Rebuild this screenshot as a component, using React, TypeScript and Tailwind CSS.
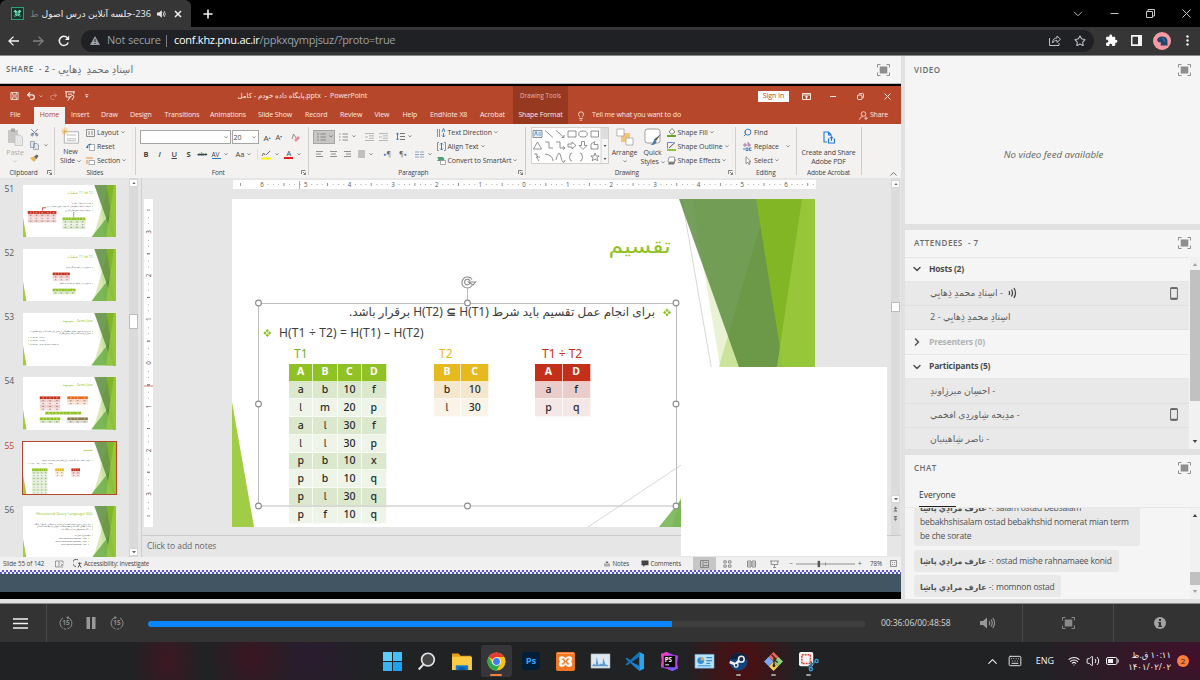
import React from "react";
import {
  Star,
  Wifi,
  Volume2,
  Keyboard,
  ChevronUp,
  ChevronDown,
  ChevronRight,
  Lightbulb,
  Undo2,
  Redo2,
  Scissors,
  Search,
} from "lucide-react";
import { MdExtension } from "react-icons/md";

const hostName = "اسِتادِ محمدِ ذِهابِي";
const chatName = "عارف مرادِي پاشِا";

function Caret({ className = "" }: { className?: string }) {
  return (
    <svg viewBox="0 0 5 3" className={"inline-block h-[2.500px] w-[4px] shrink-0 opacity-75 " + className} fill="none">
      <path d="M.5.5 2.5 2.3 4.5.5" stroke="currentColor" strokeWidth=".9" />
    </svg>
  );
}

function FullIcon({ className = "text-[#8e8e8e]" }: { className?: string }) {
  return (
    <svg viewBox="0 0 13 12" className={"h-[12px] w-[13px] shrink-0 " + className} fill="none" stroke="currentColor">
      <path d="M.5 3.5v-3h3M9.5.5h3v3M12.5 8.5v3h-3M3.5 11.5h-3v-3" />
      <rect x="2.700" y="2.500" width="7.600" height="7" fill="currentColor" stroke="none" />
    </svg>
  );
}

/* ---------- Browser chrome ---------- */

function TabBar() {
  return (
    <div className="flex h-[27px] shrink-0 items-center bg-black">
      <div className="flex h-full w-[191px] items-center rounded-t-[6px] bg-[#363636] pl-[11px]">
        <svg viewBox="0 0 13 13" className="h-[13px] w-[13px]" fill="none">
          <rect x=".5" y=".5" width="12" height="12" fill="#16352b" stroke="#2f9d77" />
          <path d="M3.5 3.5 9.5 9.5M9.5 3.5 3.5 9.5" stroke="#7fe0bd" strokeWidth="2.4" strokeDasharray="3 1" />
          <circle cx="6.5" cy="6.5" r="1.4" fill="#2f9d77" />
        </svg>
        <div dir="rtl" className="ml-[5px] flex w-[122px] items-center whitespace-nowrap text-[9.200px] tracking-[-0.1px] text-[#e8eaed]">
          <span>236-جلسه آنلاین درس اصول</span>
          <span className="mr-[3px] text-[#77787b]">ط</span>
        </div>
        <svg viewBox="0 0 9 8" className="ml-[6px] h-[8px] w-[9px]" fill="#e8eaed">
          <path d="M0 2.6h2L4.8.3v7.4L2 5.4H0z" />
          <path d="M6 2.2q1.4 1.8 0 3.6M7.2 1q2.2 3 0 6" fill="none" stroke="#e8eaed" strokeWidth=".8" />
        </svg>
        <svg viewBox="0 0 8 8" className="ml-[8px] h-[8px] w-[8px]" stroke="#f1f3f4" strokeWidth="1.5">
          <path d="M1 1l6 6M7 1 1 7" />
        </svg>
      </div>
      <svg viewBox="0 0 10 10" className="ml-[12px] h-[10px] w-[10px]" stroke="#f1f3f4" strokeWidth="1.6">
        <path d="M5 .4v9.2M.4 5h9.2" />
      </svg>
      <div className="ml-auto flex items-center gap-[27px] pr-[9px] text-[#c6c6c6]">
        <svg viewBox="0 0 10 6" className="h-[6px] w-[10px]" fill="none" stroke="currentColor" strokeWidth=".9">
          <path d="M1 .8l4 4 4-4" />
        </svg>
        <svg viewBox="0 0 9 9" className="h-[9px] w-[9px]" fill="none" stroke="currentColor">
          <path d="M.5 4.5h8" />
        </svg>
        <svg viewBox="0 0 9 9" className="h-[9px] w-[9px]" fill="none" stroke="currentColor">
          <path d="M.5 2.5h6v6h-6zM2 2V.5h6.500v6.500H7" />
        </svg>
        <svg viewBox="0 0 9 9" className="h-[9px] w-[9px]" fill="none" stroke="currentColor">
          <path d="M.5.5l8 8M8.500.5l-8 8" />
        </svg>
      </div>
    </div>
  );
}

function AddressBar() {
  return (
    <div className="flex h-[29px] shrink-0 items-center border-b border-[#8a8a8a] bg-[#363636] pb-[1px]">
      <svg viewBox="0 0 11 10" className="ml-[8px] h-[10px] w-[11px]" fill="none" stroke="#f1f3f4" strokeWidth="1.3">
        <path d="M11 5H1M5.500.6 1 5l4.500 4.400" />
      </svg>
      <svg viewBox="0 0 11 10" className="ml-[14px] h-[10px] w-[11px]" fill="none" stroke="#808185" strokeWidth="1.3">
        <path d="M0 5h10M5.500.6 10 5 5.500 9.400" />
      </svg>
      <svg viewBox="0 0 12 12" className="ml-[14px] h-[12px] w-[12px]" fill="none" stroke="#f1f3f4" strokeWidth="1.5">
        <path d="M10.200 7.500A4.600 4.600 0 1 1 9.300 2.700" />
        <path d="M11.200.6v4.300H6.900z" fill="#f1f3f4" stroke="none" />
      </svg>
      <div className="ml-[11px] flex h-[22px] w-[1013px] items-center rounded-full bg-[#202124] pl-[9px] text-[11px]">
        <svg viewBox="0 0 10 9" className="h-[9px] w-[10px]">
          <path d="M5 0l5 9H0z" fill="#9aa0a6" />
          <path d="M5 3v3M5 7v1" stroke="#202124" />
        </svg>
        <span className="ml-[7px] w-[59px] whitespace-nowrap text-[#9aa0a6] tracking-[-0.2px]">Not secure</span>
        <span className="h-[12px] w-px bg-[#7a7d81]" />
        <span className="ml-[7px] whitespace-nowrap tracking-[-0.27px] text-white">
          conf.khz.pnu.ac.ir<span className="tracking-[-0.290px] text-[#9aa0a6]">/ppkxqympjsuz/?proto=true</span>
        </span>
        <svg viewBox="0 0 12 11" className="mr-[13px] ml-auto h-[11px] w-[12px]" fill="none" stroke="#bdc1c6">
          <path d="M.5 3v7.500h9.500V8M3.500 8C3.500 4.500 5.500 3 8 3V1l3.500 3.300L8 7.500V5.500C6 5.500 4.500 6 3.500 8z" />
        </svg>
        <Star className="mr-[8px] h-[12px] w-[12px] text-[#bdc1c6]" strokeWidth={2.200} />
      </div>
      <MdExtension className="ml-[11px] h-[13px] w-[13px] text-white" />
      <svg viewBox="0 0 11 11" className="ml-[13px] h-[11px] w-[11px]">
        <path d="M0 0h11v11H0zM1.500 1.800v7.400h5.500V1.800z" fill="#f1f3f4" fillRule="evenodd" />
      </svg>
      <svg viewBox="0 0 18 18" className="ml-[11px] h-[18px] w-[18px]">
        <circle cx="9" cy="9" r="9" fill="#f79aa3" />
        <path d="M4 8q1-4 6-3.500 4.500.5 4.500 5v4H7.500q.5-2 .5-3-3 .5-4-2.500z" fill="#23466f" />
        <path d="M9 6q3 1 3 4" stroke="#3f7cac" fill="none" />
      </svg>
      <svg viewBox="0 0 3 11" className="ml-[15px] h-[11px] w-[3px]" fill="#f1f3f4">
        <circle cx="1.500" cy="1.500" r="1.200" />
        <circle cx="1.500" cy="5.500" r="1.200" />
        <circle cx="1.500" cy="9.500" r="1.200" />
      </svg>
    </div>
  );
}

/* ---------- PowerPoint ---------- */

const menu = [
  ["Insert", "w-[30px]"],
  ["Draw", "w-[29px]"],
  ["Design", "w-[34.5px]"],
  ["Transitions", "w-[45.5px]"],
  ["Animations", "w-[48px]"],
  ["Slide Show", "w-[47px]"],
  ["Record", "w-[35px]"],
  ["Review", "w-[34.5px]"],
  ["View", "w-[28px]"],
  ["Help", "w-[27.5px]"],
  ["EndNote X8", "w-[50px]"],
  ["Acrobat", "w-[33px]"],
];

function PptTitle() {
  return (
    <div className="flex h-[38px] shrink-0 bg-[#b7472a] text-[#fbe9e4]">
      <div className="flex w-[513px] flex-col">
        <div className="flex h-[20px] items-center pl-[10px]">
          <svg viewBox="0 0 9 9" className="h-[8px] w-[9px]" fill="none" stroke="currentColor">
            <path d="M.5.5h8v8h-8zM2.500.5v3h4v-3M2.500 8.500v-3h4v3" />
          </svg>
          <Undo2 className="ml-[7px] h-[10px] w-[10px]" strokeWidth={3} />
          <Caret className="ml-[3px]" />
          <Redo2 className="ml-[6px] h-[9px] w-[9px] opacity-40" strokeWidth={2.500} />
          <svg viewBox="0 0 10 10" className="ml-[7px] h-[10px] w-[10px]" fill="none" stroke="currentColor">
            <path d="M0 .8h10M1.200 1v5h4M8.800 1v2M3 9.500l2-3.500M3 3.200h4M5 6l3-2 1 2-2 3" />
          </svg>
          <svg viewBox="0 0 4 5" className="ml-[10px] h-[4px] w-[3.500px]" fill="currentColor">
            <path d="M0 .3h4v.8H0zM0 2.300h4L2 4.600z" />
          </svg>
          <span className="ml-[149px] whitespace-nowrap text-[7px] tracking-[-0.050px]">
            پایگاه داده خودم - کامل.pptx&nbsp; -&nbsp; PowerPoint
          </span>
        </div>
        <div className="flex h-[18px] items-center pt-px text-[7px] tracking-[-0.1px]">
          <span className="w-[34px] pl-[10px]">File</span>
          <span className="mr-[6px] flex h-full w-[31px] items-center justify-center bg-[#f3f2f1] text-[#b7472a]">Home</span>
          {menu.map(([label, width]) => (
            <span key={label} className={"shrink-0 whitespace-nowrap " + width}>
              {label}
            </span>
          ))}
        </div>
      </div>
      <div className="flex w-[55px] flex-col items-center bg-[#973920] text-[7px]">
        <span className="flex h-[20px] items-center whitespace-nowrap text-[6.200px] text-[#e3b5a8]">Drawing Tools</span>
        <span className="flex h-[18px] items-center pt-px whitespace-nowrap tracking-[-0.12px]">Shape Format</span>
      </div>
      <div className="flex flex-1 flex-col">
        <div className="flex h-[20px] items-center">
          <span className="ml-[190px] flex h-[11px] w-[31px] items-center justify-center bg-white text-[7px] text-[#b7472a]">Sign in</span>
          <svg viewBox="0 0 9 7" className="ml-[13px] h-[7px] w-[9px]" fill="none" stroke="currentColor">
            <path d="M.5.5h8v6h-8zM.5 2h8M4.500 6V3M3 4.300 4.500 3 6 4.300" />
          </svg>
          <span className="ml-[19px] h-px w-[6px] bg-current" />
          <svg viewBox="0 0 7 7" className="ml-[21px] h-[7px] w-[7px]" fill="none" stroke="currentColor">
            <rect x=".5" y="2" width="4.500" height="4.500" rx="1" />
            <path d="M2 1q0-.5 1-.5h2.500q1 0 1 1V4q0 1-.8 1" />
          </svg>
          <svg viewBox="0 0 7 7" className="ml-[20px] h-[7px] w-[7px]" stroke="currentColor">
            <path d="M.5.5l6 6M6.500.5l-6 6" />
          </svg>
        </div>
        <div className="flex h-[18px] items-center pt-px text-[7px]">
          <Lightbulb className="ml-[8px] h-[10px] w-[10px]" />
          <span className="ml-[6px] tracking-[-0.11px]">Tell me what you want to do</span>
          <svg viewBox="0 0 9 9" className="mr-[2px] ml-auto h-[9px] w-[9px]" fill="none" stroke="currentColor" strokeWidth=".8">
            <circle cx="4.500" cy="3" r="2.300" />
            <path d="M.5 8.700q.5-3 3-3.200M7 5.500v3.500M5.300 7.200h3.500" />
          </svg>
          <span className="mr-[13px] tracking-[-0.15px]">Share</span>
        </div>
      </div>
    </div>
  );
}

function Group({
  label,
  width,
  corner = true,
  children,
}: {
  label: string;
  width: string;
  corner?: boolean;
  children: React.ReactNode;
}) {
  return (
    <div className={"flex shrink-0 " + width}>
      <div className="flex min-w-0 flex-1 flex-col">
        <div className="flex h-[43px] flex-1">{children}</div>
        <div className="flex h-[11px] items-center justify-center text-[6.500px] tracking-[-0.15px] text-[#444]">
          <span className="flex-1 text-center whitespace-nowrap">{label}</span>
          {corner && (
            <svg viewBox="0 0 5 5" className="mr-[2px] h-[5px] w-[5px]" fill="none" stroke="#666" strokeWidth=".8">
              <path d="M.5 4V.5h4M2 2l2.500 2.500M4.500 2.500v2H2.500" />
            </svg>
          )}
        </div>
      </div>
      <span className="mt-[3px] h-[48px] w-px bg-[#d0cfce]" />
    </div>
  );
}

function Lines({ className = "", d }: { className?: string; d: string }) {
  return (
    <svg viewBox="0 0 9 8" className={"h-[8px] w-[9px] shrink-0 " + className} fill="none" stroke="#777" strokeWidth=".8">
      <path d={d} />
    </svg>
  );
}

function Ribbon() {
  return (
    <div className="flex h-[54px] shrink-0 bg-[#f3f2f1] text-[7px] leading-[9px] tracking-[-0.08px] text-[#444]">
      <Group label="Clipboard" width="w-[55px]">
        <div className="flex w-[30px] flex-col items-center pt-[4px] text-[#b0aeac]">
          <svg viewBox="0 0 16 18" className="h-[18px] w-[16px]">
            <path d="M1 2h10v13H1z" fill="#c9c7c5" />
            <path d="M4 .5h4V4H4z" fill="#a9a7a5" />
            <path d="M8 7h5l2.500 2.500V17.500H8z" fill="#e9e8e8" stroke="#bbb" strokeWidth=".7" />
          </svg>
          <span className="mt-[2px]">Paste</span>
          <Caret className="mt-[3px]" />
        </div>
        <div className="flex flex-1 flex-col gap-[4px] pt-[4px]">
          <Scissors className="h-[9px] w-[9px] -rotate-90 text-[#46678f]" />
          <div className="flex items-center gap-[5px]">
            <svg viewBox="0 0 9 9" className="h-[9px] w-[9px]" fill="#e4e9ee" stroke="#8a97a5" strokeWidth=".8">
              <path d="M.5.5h4v6h-4zM3.500 2.500h3.500l1.500 1.500v4.500h-5z" />
            </svg>
            <Caret />
          </div>
          <svg viewBox="0 0 9 9" className="h-[9px] w-[9px]">
            <path d="M0 4l4 4 2.500-3L4 2.500z" fill="#e8b35d" />
            <path d="M4 2.500l3-2 1.500 1.500L6.500 5z" fill="#666" />
          </svg>
        </div>
      </Group>
      <Group label="Slides" width="w-[80.500px]" corner={false}>
        <div className="flex w-[31px] flex-col items-center pt-[3px] text-center whitespace-nowrap">
          <svg viewBox="0 0 20 18" className="h-[18px] w-[19px]" fill="none">
            <path d="M3.500 4.500h15v12h-15z" fill="#fff" stroke="#999" strokeWidth=".8" />
            <path d="M6 8h10M6 12h10M6 14h10" stroke="#bbb" />
            <path d="M4 0v8M0 4h8M1 1l6 6M7 1 1 7" stroke="#e9ae49" strokeWidth=".8" />
          </svg>
          <span className="mt-[2px]">New</span>
          <span>Slide <Caret /></span>
        </div>
        <div className="flex flex-col gap-[5px] pt-[4px] whitespace-nowrap">
          <span className="flex items-center gap-[2px]"><Lines d="M.5.5h8v7h-8zM2 3h2M5 3h2M2 5h2M5 5h2" />Layout <Caret /></span>
          <span className="flex items-center gap-[2px]">
            <svg viewBox="0 0 9 8" className="h-[8px] w-[9px]" fill="none"><path d="M3.500 1.500h5v6h-5z" fill="#fff" stroke="#888" strokeWidth=".7" /><path d="M5 1Q1 1 1 5M0 3.500 1 5l1.500-1" stroke="#2e75b6" /></svg>
            Reset
          </span>
          <span className="flex items-center gap-[2px]">
            <svg viewBox="0 0 9 8" className="h-[8px] w-[9px]" fill="none"><path d="M0 1h7M1 3v4" stroke="#e08a3c" /><path d="M3 3.500h5.500v4H3z" fill="#fff" stroke="#888" strokeWidth=".7" /></svg>
            Section <Caret />
          </span>
        </div>
      </Group>
      <Group label="Font" width="w-[173.500px]">
        <div className="flex flex-1 flex-col pt-[6px] pl-[4px]">
          <div className="flex h-[14px] items-center">
            <span className="flex h-[14px] w-[91px] items-center justify-end border border-[#a5a5a5] bg-white pr-[2px]"><Caret /></span>
            <span className="ml-px flex h-[14px] w-[27px] items-center justify-between border border-[#a5a5a5] bg-white px-[1px] pr-[2px]">20 <Caret /></span>
            <span className="ml-[5px] text-[8px]">A<sup className="text-[4px] text-[#2e75b6]">▴</sup></span>
            <span className="ml-[5px] text-[7.500px]">A<sup className="text-[4px] text-[#2e75b6]">▾</sup></span>
            <svg viewBox="0 0 9 9" className="ml-[9px] h-[9px] w-[9px]"><path d="M1 6 2.500 1 5 5" fill="none" stroke="#777" strokeWidth=".8" /><path d="M3 7l4-4 2 2-4 4z" fill="#e58fa0" /></svg>
          </div>
          <div className="mt-[4px] flex h-[13px] items-center text-[7.500px]">
            <b className="w-[15px] pl-[4px]">B</b>
            <i className="w-[13px] pl-[4px] font-semibold">I</i>
            <u className="w-[15px] pl-[4px] font-semibold">U</u>
            <b className="w-[14px] pl-[4px]">S</b>
            <s className="w-[15px] pl-px text-[6px]">abc</s>
            <span className="w-[9px] border-b border-[#2e75b6] text-[6.500px] leading-[7px]">AV</span>
            <Caret className="ml-[3px]" />
            <span className="ml-[8px]">Aa</span>
            <Caret className="ml-[3px]" />
            <span className="ml-[6px] h-[11px] w-px bg-[#ddd]" />
            <svg viewBox="0 0 10 10" className="ml-[3px] h-[10px] w-[10px]"><path d="M1 6l1.500-3L4 5M5 5l4-4" stroke="#666" fill="none" /><path d="M0 7.500h10v2H0z" fill="#fff200" /></svg>
            <Caret className="ml-[4px]" />
            <span className="ml-[5px] flex w-[9px] justify-center border-b-2 border-[#e51b1b] leading-[7px]">A</span>
            <Caret className="ml-[4px]" />
          </div>
        </div>
      </Group>
      <Group label="Paragraph" width="w-[216.500px]">
        <div className="flex w-[127.500px] flex-col pt-[5px] pl-[4px]">
          <div className="flex h-[15px] items-center">
            <span className="flex h-[14px] w-[22px] items-center gap-[3px] border border-[#a8a6a4] bg-[#c8c6c4] pl-[3px]"><Lines d="M0 1h2M3.500 1H9M0 4h2M3.500 4H9M0 7h2M3.500 7H9" /><Caret /></span>
            <Lines className="ml-[4px]" d="M0 1h1.500M3.500 1H9M0 4h1.500M3.500 4H9M0 7h1.500M3.500 7H9" /><Caret className="ml-[4px]" />
            <Lines className="ml-[9px] opacity-60" d="M0 .5h9M4 2.800h5M4 5.200h5M0 7.500h9M3 4H0" />
            <Lines className="ml-[5px] opacity-60" d="M0 .5h9M4 2.800h5M4 5.200h5M0 7.500h9M0 4h3" />
            <svg viewBox="0 0 9 9" className="ml-[8px] h-[9px] w-[9px]" fill="none"><path d="M1.500 1v7M.2 2.300 1.500 1l1.300 1.300M.2 6.700 1.500 8l1.300-1.300" stroke="#2e75b6" strokeWidth=".9" /><path d="M4 1.500h5M4 4.500h5M4 7.500h5" stroke="#777" /></svg>
            <Caret className="ml-[3px]" />
          </div>
          <div className="mt-[3px] flex h-[14px] items-center">
            <Lines className="ml-[2px]" d="M1 1.500h7M1 4h5M1 6.500h7" />
            <Lines className="ml-[5px]" d="M1 1.500h7M2 4h5M1 6.500h7" />
            <Lines className="ml-[5px]" d="M1 1.500h7M3 4h5M1 6.500h7" />
            <Lines className="ml-[5px]" d="M1 1h7M1 3h7M1 5h7M1 7h7" />
            <Caret className="ml-[3px]" />
            <span className="ml-[11px] text-[7px] text-[#666]"><span className="text-[5px] text-[#2e75b6]">▸</span>¶</span>
            <span className="ml-[8px] text-[7px] text-[#666]">¶<span className="text-[5px] text-[#2e75b6]">◂</span></span>
            <svg viewBox="0 0 9 7" className="ml-[9px] h-[7px] w-[9px]" stroke="#8aa7bf" strokeWidth="1.200"><path d="M0 1h4M5 1h4M0 3.500h4M5 3.500h4M0 6h4M5 6h4" /></svg>
            <Caret className="ml-[4px]" />
          </div>
        </div>
        <div className="flex flex-col gap-[5px] pt-[4px] whitespace-nowrap">
          <span className="flex items-center gap-[2px]"><svg viewBox="0 0 9 9" className="h-[9px] w-[9px]" fill="none"><path d="M.5 1v8M2.500 1v8" stroke="#777" strokeWidth=".8" /><path d="M5 4l1.500-3.500L8 4M6.500 5v4M5 7.500 6.500 9 8 7.500" stroke="#2e75b6" strokeWidth=".9" /></svg>Text Direction <Caret /></span>
          <span className="flex items-center gap-[2px]"><svg viewBox="0 0 9 9" className="h-[9px] w-[9px]" fill="none"><path d="M2 .5H.5v8H2M7 .5h1.500v8H7" stroke="#777" strokeWidth=".8" /><path d="M4.500 1v7M3 2.500 4.500 1 6 2.500M3 6.500 4.500 8 6 6.500" stroke="#2e75b6" strokeWidth=".9" /></svg>Align Text <Caret /></span>
          <span className="flex items-center gap-[2px]"><svg viewBox="0 0 9 9" className="h-[9px] w-[9px]"><path d="M0 1h6l1.500 2L6 5H0l1.500-2z" fill="#4ea077" /><path d="M3.500 4.500h5v4h-5z" fill="#fff" stroke="#888" strokeWidth=".7" /></svg>Convert to SmartArt <Caret /></span>
        </div>
      </Group>
      <Group label="Drawing" width="w-[210.500px]">
        <div className="pt-[3px] pl-[5px]">
          <svg viewBox="0 0 78 37" className="h-[37px] w-[78px]" fill="none" stroke="#777" strokeWidth=".8">
            <path d="M.5.5h77v36h-77z" fill="#fff" stroke="#c8c6c4" />
            <path d="M70 .5h7.500v36H70z" fill="#f6f6f6" stroke="#c8c6c4" />
            <path d="M70 1h7v11h-7z" fill="#ddd" stroke="none" />
            <path d="M2 3.500h9v7H2z" fill="#e5eef6" /><path d="M3.500 8.500 5 4.500l1.500 4M7.500 6h2.500M7.500 8h2.500" stroke="#2e75b6" strokeWidth=".7" />
            <path d="M14 3.500l8 7M25 3.500l8 7M33 8v2.500h-2.500M37 4h8v6h-8zM60 4h7.500v6H60z" />
            <ellipse cx="52" cy="7" rx="4.300" ry="3" />
            <path d="M2.500 22l4-7 4 7zM14 15h4v6h4M25 15h4v6h5M32 19.500l2 1.500-2 1.500M37 17h4v-2l4 3.500-4 3.500v-2h-4zM50.500 14.500h3v4h2.500l-4 4-4-4h2.500zM60 22v-5l4-2.500-1 3h4v4.500z" />
            <path d="M3 27h3v3h3M5 31l2-2M8 34l-2-3M14 27q8 1 8 7M25 33q3-12 5-3t4 3M41 26q-2 0-2 2t-1 2q1 0 1 2t2 2M49 26q2 0 2 2t1 2q-1 0-1 2t-2 2" />
            <path d="M64 26l1.200 3h3l-2.300 1.800.9 3-2.800-1.700-2.800 1.700.9-3L59.800 29h3z" />
            <path d="M72.500 18h3L74 20zM72 29h4M72.500 31h3L74 33z" fill="#555" stroke="none" />
          </svg>
        </div>
        <div className="flex w-[32px] flex-col items-center pt-[4px]">
          <svg viewBox="0 0 18 18" className="h-[18px] w-[18px]" stroke="#999" strokeWidth=".7"><path d="M5 5h9v9H5z" fill="#f2c77d" stroke="none" /><path d="M1 1h7v7H1zM10 10h7v7h-7z" fill="#fff" /></svg>
          <span className="mt-[2px]">Arrange</span>
          <Caret className="mt-[3px]" />
        </div>
        <div className="flex w-[24px] flex-col items-center pt-[4px] whitespace-nowrap">
          <svg viewBox="0 0 18 18" className="h-[18px] w-[18px]"><rect x="1" y="1" width="15" height="14" rx="2.500" fill="#fff" stroke="#888" strokeWidth=".8" /><path d="M17 6l-5 7-2-1.500z" fill="#555" /><path d="M10 11.500l2.500 2q-1 4-6 3.500 2.500-1 3.500-5.500z" fill="#3c78b4" /></svg>
          <span className="mt-[2px]">Quick</span>
          <span>Styles <Caret /></span>
        </div>
        <div className="flex flex-col gap-[5px] pt-[4px] pl-[2px] whitespace-nowrap">
          <span className="flex items-center gap-[2px]"><svg viewBox="0 0 9 9" className="h-[9px] w-[9px]"><path d="M2 4l3-3.500L8 4 5 6.500z" fill="#fff" stroke="#666" strokeWidth=".8" /><path d="M0 7h9v2H0z" fill="#6aa52b" /></svg>Shape Fill <Caret /></span>
          <span className="flex items-center gap-[2px]"><svg viewBox="0 0 9 9" className="h-[9px] w-[9px]"><path d="M.5.5h6M.5.5v6" stroke="#4a86c5" strokeWidth=".9" /><path d="M2 6l6-5.500" stroke="#555" /><path d="M0 7h9v2H0z" fill="#8cc63f" /></svg>Shape Outline <Caret /></span>
          <span className="flex items-center gap-[2px]"><svg viewBox="0 0 9 9" className="h-[9px] w-[9px]"><path d="M3 3.500h6L7 8.500H1z" fill="#777" /><path d="M2 1h5.500v5H1z" fill="#fff" stroke="#888" strokeWidth=".8" /></svg>Shape Effects <Caret /></span>
        </div>
      </Group>
      <Group label="Editing" width="w-[60.500px]" corner={false}>
        <div className="flex flex-col gap-[5px] pt-[4px] pl-[7px] whitespace-nowrap">
          <span className="flex items-center gap-[2px]"><Search className="h-[9px] w-[9px] -scale-x-100 text-[#2e75b6]" strokeWidth={2.500} />Find</span>
          <span className="flex items-center gap-[2px]"><svg viewBox="0 0 9 9" className="h-[9px] w-[9px]" fill="none" strokeWidth=".9"><path d="M1 2h2v2H1zM5 0v4h2V2H5" stroke="#a56aa5" /><path d="M3 6v2.500h2V6zM8.500 6h-2v2.500h2M0 7h2" stroke="#2e75b6" /></svg>Replace <Caret className="ml-[5px]" /></span>
          <span className="flex items-center gap-[2px]"><svg viewBox="0 0 9 9" className="h-[9px] w-[9px]" fill="#fff" stroke="#777" strokeWidth=".8"><path d="M3 .8v7l1.800-1.600L6 8.500l1-.5-1-2.300h2z" /></svg>Select <Caret /></span>
        </div>
      </Group>
      <Group label="Adobe Acrobat" width="w-[65px]" corner={false}>
        <div className="flex flex-1 flex-col items-center pt-[7px] tracking-[-0.15px] whitespace-nowrap">
          <svg viewBox="0 0 12 13" className="h-[13px] w-[12px]" fill="none" stroke="#2577d2" strokeWidth="1.100"><path d="M4 11H1V1h4.500L8 3.500V5M5.500 1v3H8M6.500 8H5.500v4h6V8h-1M8.500 10V6M7 7.200 8.500 5.700 10 7.200" /></svg>
          <span className="mt-[4px]">Create and Share</span>
          <span>Adobe PDF</span>
        </div>
      </Group>
      <div className="flex flex-1 items-end justify-end pr-[4px] pb-[2px]">
        <svg viewBox="0 0 7 4" className="h-[4px] w-[7px]" fill="none" stroke="#555" strokeWidth=".8"><path d="M.5 3.500l3-3 3 3" /></svg>
      </div>
    </div>
  );
}

function Decor() {
  return (
    <g>
      <path d="M450 0L507 328M356 328L583 177" stroke="#d8d8d8" strokeWidth="1" />
      <path d="M460 0H583V328H515z" fill="#90c226" opacity=".2" />
      <path d="M536 0H583V328H440z" fill="#90c226" opacity=".32" />
      <path d="M427 328L583 132V328z" fill="#5ba536" opacity=".75" />
      <path d="M447 0H583V328H564z" fill="#4f8430" opacity=".78" />
      <path d="M524 0H583V328H577z" fill="#86bb20" opacity=".85" />
      <path d="M570 0H583V328H521z" fill="#9ccb40" opacity=".8" />
      <path d="M0 203L22 328H0z" fill="#a0cc46" />
    </g>
  );
}

function MiniTable({ x, y, cols, rows, cw, head, tint }: { x: number; y: number; cols: number; rows: number; cw: number; head: string; tint: string }) {
  const cells = [];
  for (let r = 0; r <= rows; r++)
    for (let c = 0; c < cols; c++)
      cells.push(
        <g key={r + "-" + c}>
          <rect x={x + c * cw} y={y + r * 18} width={cw - 0.6} height={17.4} fill={r ? tint : head} opacity={r ? (r % 2 ? 1 : 0.6) : 1} />
          <rect x={x + c * cw + cw * 0.38} y={y + r * 18 + 6} width={cw * 0.24} height={6} fill={r ? "#555" : "#fff"} opacity={0.55} />
        </g>,
      );
  return <g>{cells}</g>;
}

function Heading({ children }: { children: string }) {
  return (
    <text x="438" y="54" textAnchor="end" fontSize="23" fill="#90c226">
      {children}
    </text>
  );
}

function Body({ x = 425, y, children, anchor = "end", size = 12 }: { x?: number; y: number; children: string; anchor?: "start" | "end"; size?: number }) {
  return (
    <g>
      <text x={x} y={y} textAnchor={anchor} fontSize={size} fill="#404040">
        {children}
      </text>
      <circle cx={anchor === "end" ? x + 12 : x - 10} cy={y - 4} r="3" fill="#90c226" />
    </g>
  );
}

const red = { head: "#c42f1a", tint: "#eecbc9" };
const green = { head: "#90c226", tint: "#d9e8c9" };

const slides: { n: number; art: React.ReactNode }[] = [
  {
    n: 51,
    art: (
      <g>
        <Heading>عملیات T1 ⋈ T2</Heading>
        <Body y={118}>مرحله ۱: ضرب T1 × T2</Body>
        <Body y={138}>مرحله ۲: انتخاب سطرهایی که مقدار ستون مشترک برابر</Body>
        <Body y={160}>مرحله ۳: حذف ستون‌های تکراری</Body>
        <MiniTable x={30} y={163} cols={5} rows={3} cw={36} {...red} />
        <MiniTable x={248} y={203} cols={4} rows={3} cw={36} {...green} />
        <path d="M122 160V142H145" stroke="#b03a2e" strokeWidth="5" fill="none" />
        <path d="M318 168V200" stroke="#6aa52b" strokeWidth="5" />
      </g>
    ),
  },
  {
    n: 52,
    art: (
      <g>
        <Heading>عملیات T1 ⋈ T2</Heading>
        <Body y={120}>اگر جدول T2 به صورت زیر باشد</Body>
        <MiniTable x={186} y={147} cols={3} rows={2} cw={36} {...red} />
        <Body y={222}>حاصل T1 ⋈ T2 به صورت زیر خواهد بود</Body>
        <MiniTable x={186} y={248} cols={4} rows={1} cw={36} {...green} />
      </g>
    ),
  },
  {
    n: 53,
    art: (
      <g>
        <Heading>نیم‌پیوند - Semi-Join</Heading>
        <Body y={118} size={12.500}>نیم پیوند دو جدول شامل سطرهایی از جدول اول است که در پیوند طبیعی با</Body>
        <Body y={133}>جدول دوم شرکت می‌کنند و ستون‌های آن</Body>
        <Body x={45} y={158} anchor="start">T1 ⋉ T2 = Π (T1)</Body>
        <Body x={45} y={178} anchor="start">T1 ⋊ T2 = Π (T2)</Body>
        <Body x={45} y={198} anchor="start">T1 ⋉ T2 = Π (T1 ⋈ T2) ≠ T2 ⋉ T1</Body>
      </g>
    ),
  },
  {
    n: 54,
    art: (
      <g>
        <Heading>نیم‌پیوند - Semi-Join</Heading>
        <MiniTable x={105} y={121} cols={3} rows={4} cw={43} {...red} />
        <MiniTable x={278} y={121} cols={3} rows={2} cw={43} head="#e76618" tint="#f8d3c4" />
        <MiniTable x={140} y={217} cols={5} rows={0} cw={45} {...green} />
        <MiniTable x={105} y={253} cols={3} rows={1} cw={43} {...green} />
        <MiniTable x={278} y={253} cols={3} rows={1} cw={43} head="#8a7a4a" tint="#dedbd0" />
      </g>
    ),
  },
  {
    n: 55,
    art: (
      <g>
        <Heading>تقسیم</Heading>
        <Body y={118}>برای انجام عمل تقسیم باید شرط H(T2) ⊆ H(T1) برقرار باشد.</Body>
        <Body x={47} y={138} anchor="start">H(T1 ÷ T2) = H(T1) – H(T2)</Body>
        <MiniTable x={57} y={165} cols={4} rows={8} cw={24.300} {...green} />
        <MiniTable x={202} y={165} cols={2} rows={2} cw={27.500} head="#e6b91e" tint="#f5e8cf" />
        <MiniTable x={303} y={165} cols={2} rows={2} cw={27.500} {...red} />
      </g>
    ),
  },
  {
    n: 56,
    art: (
      <g>
        <Heading>(Structured Query Language) SQL</Heading>
        <Body y={118} size={12.500}>زبان پرس و جوی ساخت یافته برای تعریف و دستکاری داده‌ها در پایگاه</Body>
        <Body y={133} size={12.500}>داده رابطه‌ای است که توسط استاندارد جهانی پذیرفته شده است و</Body>
        <Body y={148}>در اکثر سیستم‌های مدیریت پایگاه داده</Body>
        <Body y={186}>انواع دستورات SQL:</Body>
        <Body x={400} y={206}>Data Definition Language - DDL</Body>
        <Body x={400} y={225}>Data Manipulation Language - DML</Body>
        <Body x={400} y={245}>Data Control Language - DCL</Body>
      </g>
    ),
  },
];

function Thumbs() {
  return (
    <div className="flex h-full w-[129px] flex-col overflow-hidden pt-[5.500px]">
      {slides.map(({ n, art }) => (
        <div key={n} className="flex h-[64.300px] shrink-0 items-start">
          <span className={"w-[21.500px] pl-[4.500px] text-[8.500px] leading-[10px] " + (n === 55 ? "text-[#c2452a]" : "text-[#5a5a5a]")}>{n}</span>
          <div className={"border-[1.500px] " + (n === 55 ? "border-[#b7472a]" : "border-transparent")}>
            <svg viewBox="0 0 583 328" className="block h-[52.500px] w-[93px] bg-white">
              <Decor />
              {art}
            </svg>
          </div>
        </div>
      ))}
    </div>
  );
}

function HRuler() {
  const marks = [];
  for (let i = -6; i <= 6; i++) marks.push(i);
  return (
    <svg viewBox="0 0 583 9" className="h-[9px] w-[583px] bg-white" fontSize="6.200" fill="#555">
      {marks.map((i) => (
        <g key={i}>
          <text x={291 + i * 43.650} y="6.800" textAnchor="middle">{Math.abs(i)}</text>
          <path d={`M${291 + i * 43.650 + 21.800} 3v3`} stroke="#777" strokeWidth=".8" />
          <path d={`M${291 + i * 43.650 + 5.500} 4.500h1M${291 + i * 43.650 + 11} 4.500h1M${291 + i * 43.650 + 16} 4.500h1M${291 + i * 43.650 + 27} 4.500h1M${291 + i * 43.650 + 32} 4.500h1M${291 + i * 43.650 + 37.500} 4.500h1`} stroke="#999" strokeWidth=".8" />
        </g>
      ))}
      <path d="M7.500 3v3" stroke="#777" strokeWidth=".7" />
      <path d="M66.500 1v8" stroke="#c77" strokeWidth=".7" />
    </svg>
  );
}

function VRuler() {
  const marks = [-3, -2, -1, 0, 1, 2, 3];
  return (
    <svg viewBox="0 0 9 328" className="h-[328px] w-[9px] bg-white" fontSize="6.200" fill="#555">
      {marks.map((i) => (
        <g key={i}>
          <text transform={`translate(6.500 ${164 + i * 43.700}) rotate(-90)`} textAnchor="middle">{Math.abs(i)}</text>
          <path d={`M3 ${164 + i * 43.700 + 21.800}h3M3 ${164 + i * 43.700 - 21.800}h3`} stroke="#777" strokeWidth=".8" />
          <path d={`M4.500 ${164 + i * 43.700 + 8}v1M4.500 ${164 + i * 43.700 + 14}v1M4.500 ${164 + i * 43.700 - 9}v1M4.500 ${164 + i * 43.700 - 15}v1`} stroke="#999" strokeWidth=".8" />
        </g>
      ))}
      <path d="M0 187h9" stroke="#c2452a" strokeWidth=".7" />
    </svg>
  );
}

function DataTable({ rows, col, head, odd, even }: { rows: string[][]; col: string; head: string; odd: string; even: string }) {
  return (
    <div className="flex flex-col">
      {rows.map((r, i) => (
        <div key={i} className={"flex " + (i === 0 ? "h-[18px]" : "h-[17.750px]")}>
          {r.map((c, j) => (
            <div
              key={j}
              className={
                "flex items-center justify-center border-r border-b border-white/70 pt-[0.500px] text-[10.500px] " +
                col +
                " " +
                (i === 0 ? "font-bold text-white " + head : "font-medium text-[#2a2a2a] " + (i % 2 ? odd : even))
              }
            >
              <span className={c === "l" ? "font-['Inter'] [font-feature-settings:'cv05'] font-normal" : ""}>{c}</span>
            </div>
          ))}
        </div>
      ))}
    </div>
  );
}

const t1 = ["ABCD", "a b 10 f", "l m 20 p", "a l 30 f", "l l 30 p", "p b 10 x", "p b 10 q", "p l 30 q", "p f 10 q"].map((r, i) => (i ? r.split(" ") : r.split("")));

function Slide() {
  return (
    <div className="relative h-[328px] w-[583px] overflow-hidden bg-white font-['Noto_Sans','DejaVu_Sans',sans-serif]">
      <svg viewBox="0 0 583 328" className="absolute inset-0 h-[328px] w-[583px]">
        <Decor />
      </svg>
      <div dir="rtl" className="absolute top-[27px] right-[144px] font-['DejaVu_Sans'] text-[20px] leading-[40px] whitespace-nowrap text-[#90c226]">
        <span className="inline-block origin-right scale-x-[1.18]">تقسیم</span>
      </div>
      <div dir="rtl" className="absolute top-[104px] right-[160px] text-[12px] leading-[17px] whitespace-nowrap text-[#404040]">
        برای انجام عمل تقسیم باید شرط <span dir="ltr">H(T2) <b>⊆</b> H(T1)</span> برقرار باشد.
      </div>
      <div className="absolute top-[126px] left-[47px] text-[12px] leading-[16px] tracking-[0.150px] whitespace-nowrap text-[#404040]">H(T1 ÷ T2) = H(T1) – H(T2)</div>
      <div className="absolute top-[146.500px] left-[62px] text-[12px] leading-[16px] text-[#6fb12f]">T1</div>
      <div className="absolute top-[146.500px] left-[207px] text-[12px] leading-[16px] text-[#e6b91e]">T2</div>
      <div className="absolute top-[146.500px] left-[310px] text-[12px] leading-[16px] whitespace-nowrap text-[#c42f1a]">T1 ÷ T2</div>
      <div className="absolute top-[164.500px] left-[57px]">
        <DataTable rows={t1} col="w-[24.400px]" head="bg-[#90c226]" odd="bg-[#dbe8cd]" even="bg-[#eef4e8]" />
      </div>
      <div className="absolute top-[164.500px] left-[201.500px]">
        <DataTable rows={[["B", "C"], ["b", "10"], ["l", "30"]]} col="w-[27.800px]" head="bg-[#e6b91e]" odd="bg-[#f5e7cd]" even="bg-[#faf3e8]" />
      </div>
      <div className="absolute top-[164.500px] left-[303px]">
        <DataTable rows={[["A", "D"], ["a", "f"], ["p", "q"]]} col="w-[27.800px]" head="bg-[#c42f1a]" odd="bg-[#eaccca]" even="bg-[#f5e7e6]" />
      </div>
      <svg viewBox="0 0 583 328" className="absolute inset-0 h-[328px] w-[583px]" fill="none">
        <path d="M26.500 104.500h418v202.500h-418zM235.500 90v14" stroke="#bdbdbd" />
        <path d="M240 80.500a5.500 5.500 0 1 0 0 6M237.800 84.500a2.800 2.800 0 1 1 .2-2.500M236.500 83h7l-2.500 3z" stroke="#8a8a8a" strokeWidth="1.100" />
        <g fill="#fff" stroke="#8c8c8c" strokeWidth="1.100">
          {[[26.500, 104], [235.500, 104], [444, 104], [26.500, 205], [444, 205], [26.500, 307], [235.500, 307], [444, 307]].map(([x, y]) => (
            <circle key={x + "-" + y} cx={x} cy={y} r="2.900" />
          ))}
        </g>
        <g fill="#90c226">
          {[[35.300, 134], [435, 113.500]].map(([x, y]) => (
            <path key={x} d={`M${x} ${y - 4}l1.700 1.700-1.700 1.700-1.700-1.700zM${x} ${y + 0.600}l1.700 1.700-1.700 1.700-1.700-1.700zM${x - 2.300} ${y - 1.700}l1.700 1.700-1.700 1.700-1.700-1.700zM${x + 2.300} ${y - 1.700}l1.700 1.700-1.700 1.700-1.700-1.700z`} />
          ))}
        </g>
      </svg>
    </div>
  );
}

function ScrollArrow({ up = false }: { up?: boolean }) {
  return (
    <span className="flex h-[8px] w-[9px] items-center justify-center border border-[#d5d5d5] bg-white">
      <svg viewBox="0 0 4 2.500" className={"h-[2.500px] w-[4px] " + (up ? "" : "rotate-180")} fill="#666">
        <path d="M0 2.500 2 0l2 2.500z" />
      </svg>
    </span>
  );
}

function Workspace() {
  return (
    <div className="relative flex h-[379px] shrink-0 bg-[#e6e6e6]">
      <Thumbs />
      <div className="flex w-[9px] flex-col bg-[#dadada] pt-px">
        <ScrollArrow up />
        <span className="mt-[127px] h-[15px] border border-[#bbb] bg-white" />
        <span className="mt-auto mb-[1px]"><ScrollArrow /></span>
      </div>
      <div className="ml-[3px] flex flex-1 flex-col border-l border-[#cfcfcf]">
        <div className="flex h-[357px]">
          <div className="flex w-[91px] pt-[21px] pl-[2px]">
            <VRuler />
          </div>
          <div className="flex flex-1 flex-col">
            <div className="flex pt-[2px]"><HRuler /></div>
            <div className="mt-[10px] -ml-px flex"><Slide /></div>
          </div>
          <div className="mr-px flex w-[9px] flex-col bg-[#dcdcdc] pt-[2px]">
            <ScrollArrow up />
            <span className="mt-[114px] h-[10px] border border-[#bbb] bg-white" />
            <span className="mt-auto"><ScrollArrow /></span>
            <svg viewBox="0 0 9 20" className="mb-[12px] h-[20px] w-[9px]" fill="#777">
              <path d="M2.500 6 4.500 3.500 6.500 6zM2.500 8.500 4.500 6 6.500 8.500zM2.500 13h4l-2 2.500zM2.500 15.500h4L4.500 18z" />
            </svg>
          </div>
        </div>
        <div className="flex flex-1 items-center border-t border-[#cbcbcb] pl-[5px] text-[8.500px] tracking-[-0.050px] text-[#666]">Click to add notes</div>
      </div>
      <div className="absolute top-[189px] left-[681px] h-[189px] w-[206px] bg-white" />
    </div>
  );
}

function Status() {
  return (
    <div className="flex h-[13px] shrink-0 items-center bg-[#f0f0f0] text-[6.200px] tracking-[-0.05px] whitespace-nowrap text-[#444]">
      <span className="ml-[3px] w-[52px]">Slide 55 of 142</span>
      <svg viewBox="0 0 9 8" className="h-[8px] w-[9px]" fill="none" stroke="#777" strokeWidth=".7"><path d="M.5 1h3.500v6H.5zM4.500 1H8v2M4.500 7H8M6 3.500l2.500 2.500M8.500 3.500 6 6" /></svg>
      <svg viewBox="0 0 9 9" className="ml-[9px] h-[9px] w-[9px]" fill="none" stroke="#555"><path d="M5 .8A3.600 3.600 0 1 0 3 7.500M6.500 3.500v3M5 4.300h3.500M6.500 6 5 8.500M6.500 6l1.700 2.500" /></svg>
      <span className="ml-[2px] tracking-[-0.150px]">Accessibility: Investigate</span>
      <svg viewBox="0 0 7 7" className="ml-auto h-[7px] w-[6px]" fill="#666"><path d="M1.500 3 3.500.5 5.500 3zM0 3.800h7v1H0zM0 5.800h7v1H0z" /></svg>
      <span className="ml-[3px] w-[28px]">Notes</span>
      <svg viewBox="0 0 8 8" className="h-[7px] w-[8px]" fill="#444"><path d="M0 .5h8v5.500H4L2 8V6H0z" /></svg>
      <span className="ml-[2px] w-[42px] tracking-[-0.130px]">Comments</span>
      <span className="flex h-[13px] w-[23px] items-center justify-center bg-[#c6c6c6]"><Lines d="M.5.5h8v7h-8zM3 .5v7M3 5.500h5.500M4.500 2.500h2.500" /></span>
      <Lines className="ml-[7px]" d="M.8.8h2.500v2.200H.8zM5.500.8H8v2.200H5.500zM.8 5h2.500v2.200H.8zM5.500 5H8v2.200H5.500z" />
      <Lines className="ml-[15px]" d="M.5 1h3.500v6H.5zM5 1h3.500v6H5zM1 3h2.500M1 5h2.500M5.500 3H8M5.500 5H8" />
      <Lines className="ml-[14px]" d="M0 1h9M1.200 1v3.500h6.600V1M4.500 4.500V7M3 7.500h3" />
      <span className="ml-[11px]">−</span>
      <svg viewBox="0 0 60 8" className="ml-[3px] h-[8px] w-[59px]"><path d="M0 4h60M30 2.500v3" stroke="#777" strokeWidth=".8" /><path d="M22 .8h2.500v6.400H22z" fill="#555" /></svg>
      <span className="ml-[3px] w-[12px]">+</span>
      <span className="w-[20px]">78%</span>
      <svg viewBox="0 0 8 8" className="mr-[4px] h-[7px] w-[7px]" fill="none" stroke="#666" strokeWidth=".8"><path d="M.5.5h7v7h-7zM2 2l1.300 1.300M6 2 4.700 3.300M2 6l1.300-1.300M6 6 4.700 4.700" /></svg>
    </div>
  );
}

/* ---------- Right rail ---------- */

function PodHeader({ children, height = "h-[27px]" }: { children: React.ReactNode; height?: string }) {
  return (
    <div className={"flex shrink-0 items-center justify-between pr-[9px] pl-[9px] text-[8px] font-semibold tracking-[0.500px] text-[#6b6b6b] " + height}>
      <span className="whitespace-pre">{children}</span>
      <FullIcon />
    </div>
  );
}

function Phone() {
  return (
    <svg viewBox="0 0 8 13" className="mr-[11px] ml-auto h-[13px] w-[8px]" fill="none" stroke="#666">
      <rect x=".6" y=".6" width="6.800" height="11.800" rx=".5" />
      <path d="M1 1.400h6M1 11.400h6" strokeWidth="1.200" />
    </svg>
  );
}

function Section({ open, muted, children }: { open: boolean; muted?: boolean; children: string }) {
  const I = open ? ChevronDown : ChevronRight;
  return (
    <div className={"flex h-[24.400px] shrink-0 items-center border-b border-[#e6e6e6] pl-[6px] text-[8.500px] font-bold tracking-[-0.2px] " + (muted ? "text-[#b3b3b3]" : "text-[#4a4a4a]")}>
      <I className="h-[12px] w-[12px] text-[#505050]" strokeWidth={3} />
      <span className="ml-[6px]">{children}</span>
    </div>
  );
}

function Person({ name, phone, talking }: { name: string; phone?: boolean; talking?: boolean }) {
  return (
    <div className="flex h-[24.300px] shrink-0 items-center border-b border-[#e0e0e0] bg-[#e9e9e9] pb-px pl-[25px] text-[9.200px] text-[#5e5e5e]">
      <span className="whitespace-nowrap">{name}</span>
      {talking && (
        <svg viewBox="0 0 9 12" className="ml-[5px] h-[12px] w-[9px]" fill="none" stroke="#444" strokeWidth="1.300">
          <path d="M1 4q1.200 2 0 4M3.500 2.500q2 3.500 0 7M6 1q3 5 0 10" />
        </svg>
      )}
      {phone && <Phone />}
    </div>
  );
}

function Tri({ up, dark }: { up?: boolean; dark?: boolean }) {
  return (
    <svg viewBox="0 0 6 4" className={"h-[3px] w-[6px] shrink-0 " + (up ? "" : "rotate-180")} fill={dark ? "#444" : "#a3a3a3"}>
      <path d="M0 4 3 0l3 4z" />
    </svg>
  );
}

function Bubble({ width, children }: { width: string; children: React.ReactNode }) {
  return <div className={"shrink-0 rounded-[3px] bg-[#e9e9e9] px-[6px] pt-[4.500px] pb-[3.500px] text-[8.500px] leading-[14px] tracking-[-0.170px] text-[#505050] " + width}>{children}</div>;
}

function Sender() {
  return <b className="text-[7.900px] tracking-[-0.1px]">{chatName}</b>;
}

function Rail() {
  return (
    <div className="flex w-[295px] shrink-0 flex-col">
      <div className="flex h-[168px] shrink-0 flex-col bg-[#f5f5f5]">
        <PodHeader>VIDEO</PodHeader>
        <div className="flex flex-1 items-center justify-center pt-[3px] pl-[2px] text-[9.700px] text-[#666] italic">
          <span>No video feed available</span>
        </div>
      </div>
      <div className="mt-[5.500px] flex h-[219.500px] shrink-0 flex-col bg-[#f5f5f5]">
        <PodHeader>{"ATTENDEES  - 7"}</PodHeader>
        <div className="flex min-h-0 flex-1">
          <div className="flex w-[284px] flex-col overflow-hidden border-t border-[#e6e6e6]">
            <Section open>Hosts (2)</Section>
            <Person name={hostName + " -"} talking phone />
            <Person name={"2 - " + hostName} />
            <Section open={false} muted>Presenters (0)</Section>
            <Section open>Participants (5)</Section>
            <Person name="احسِان ميرزِاوندِ -" />
            <Person name="مدِيحه شِاوردِي افخمي -" phone />
            <Person name="ناصر شِاهينيان -" />
          </div>
          <div className="ml-px flex w-[10px] flex-col items-center bg-[#f1f1f1] pt-[6px] pb-[6px]">
            <Tri up />
            <span className="mt-[4px] h-[131px] w-full bg-[#c1c1c1]" />
            <span className="flex-1" />
            <Tri dark />
          </div>
        </div>
      </div>
      <div className="mt-[5.500px] flex h-[144.500px] shrink-0 flex-col bg-[#f5f5f5]">
        <PodHeader height="h-[26px]">CHAT</PodHeader>
        <div className="flex h-[27px] shrink-0 items-end border-b border-[#e8e8e8] pl-[14px] text-[8.500px] text-[#333]">
          <span className="border-b border-[#222] pb-[5px] leading-[12px]">Everyone</span>
        </div>
        <div className="flex min-h-0 flex-1">
          <div className="flex w-[285px] flex-col justify-end gap-[3.500px] overflow-hidden pb-[2px] pl-[9px]">
            <Bubble width="w-[226px]">
              <Sender /> -: salam ostad bebsalam<br />
              <span className="whitespace-nowrap">bebakhshisalam ostad bebakhshid nomerat mian term</span><br />
              be che sorate
            </Bubble>
            <Bubble width="w-[205px] whitespace-nowrap"><Sender /> -: ostad mishe rahnamaee konid</Bubble>
            <Bubble width="w-[147px] whitespace-nowrap"><Sender /> -: momnon ostad</Bubble>
          </div>
          <div className="flex w-[10px] flex-col items-center bg-[#f1f1f1] py-[6px]">
            <Tri up dark />
            <span className="mt-auto mb-[5px] h-[13px] w-full bg-[#c1c1c1]" />
            <Tri />
          </div>
        </div>
      </div>
    </div>
  );
}

/* ---------- Player and taskbar ---------- */

function Fifteen({ back }: { back?: boolean }) {
  return (
    <span className="relative flex h-[14px] w-[14px] items-center justify-center text-[6.500px] font-bold text-[#8c8c8c]">
      <svg viewBox="0 0 14 14" className={"absolute inset-0 h-[14px] w-[14px] " + (back ? "" : "-scale-x-100")} fill="none" stroke="currentColor">
        <path d="M9 1.500A6 6 0 1 1 4 1.900" strokeDasharray="15 1.200 2.500 1.200" />
        <path d="M9.500 0v3.200L7 1.500z" fill="currentColor" stroke="none" />
      </svg>
      15
    </span>
  );
}

function Player() {
  return (
    <div className="flex h-[38px] shrink-0 items-center bg-[#333]">
      <div className="flex h-full w-[46px] items-center pl-[13px]">
        <svg viewBox="0 0 15 11" className="h-[11px] w-[15px]" stroke="#f2f2f2" strokeWidth="1.300"><path d="M0 1h15M0 5.500h15M0 10h15" /></svg>
      </div>
      <span className="h-full w-px bg-[#4b4b4b]" />
      <span className="ml-[12px]"><Fifteen back /></span>
      <svg viewBox="0 0 9 12" className="ml-[13px] h-[12px] w-[10px]" fill="#999"><path d="M0 0h3.500v12H0zM5.500 0H9v12H5.500z" /></svg>
      <span className="ml-[14px]"><Fifteen /></span>
      <div className="ml-[24px] h-[6px] w-[718px] translate-y-px overflow-hidden rounded-full bg-[#3e3e3e]"><div className="h-full w-[524px] bg-[#0d84ff]" /></div>
      <span className="ml-[15px] w-[99px] pt-px text-[8.500px] tracking-[-0.05px] whitespace-nowrap text-[#d8d8d8]">00:36:06/00:48:58</span>
      <svg viewBox="0 0 15 12" className="h-[12px] w-[15px]" fill="#999"><path d="M0 4h3l4-3.500v11L3 8H0z" /><path d="M9 4q1.500 2 0 4M11 2.500q2.500 3.500 0 7M12.800 1q3.500 5 0 10" fill="none" stroke="#999" strokeWidth="1.100" /></svg>
      <span className="ml-[27px] h-full w-px bg-[#4b4b4b]" />
      <span className="flex w-[90px] justify-center"><FullIcon className="text-[#8a8a8a]" /></span>
      <span className="h-full w-px bg-[#4b4b4b]" />
      <span className="flex flex-1 justify-center pl-[5px]">
        <svg viewBox="0 0 12 12" className="h-[12px] w-[12px]"><circle cx="6" cy="6" r="6" fill="#a3a3a3" /><path d="M5 2h2v2H5zM4.200 5H7v3.800h1V10H4.200V8.800H5V6.200h-.8z" fill="#333" /></svg>
      </span>
    </div>
  );
}

const apps: { key: string; run?: boolean; art: React.ReactNode }[] = [
  { key: "start", art: <g><path d="M0 0h9.500v9.500H0z" fill="#5fcdf9" /><path d="M10.500 0H20v9.500h-9.500z" fill="#45bdf5" /><path d="M0 10.500h9.500V20H0z" fill="#37b2f2" /><path d="M10.500 10.500H20V20h-9.500z" fill="#1ea1ec" /></g> },
  { key: "search", art: <g fill="none" stroke="#e3e3e3" strokeWidth="1.800"><circle cx="11.500" cy="8" r="6.700" fill="#444" /><path d="M6.800 13l-5 5.500" strokeWidth="2.200" /></g> },
  { key: "files", art: <g><path d="M0 1.500h7l2 2.500H20v15H0z" fill="#e3a11b" /><path d="M0 5h21v14H0z" fill="#fdcc45" /><path d="M4 14h13v5H4z" fill="#1277d1" /><path d="M7 16h7v3H7z" fill="#0a5ca8" /></g> },
  {
    key: "chrome",
    art: <g><circle cx="10" cy="10" r="9.500" fill="#fbc116" /><path d="M10 10 1.800 5.200A9.500 9.500 0 0 1 18.200 5.200H10z" fill="#e33b2e" /><path d="M1.800 5.200A9.500 9.500 0 0 0 10 19.500l4-7-8 0z" fill="#2da94f" /><circle cx="10" cy="10" r="4.600" fill="#fff" /><circle cx="10" cy="10" r="3.600" fill="#3a7ef0" /></g>,
  },
  { key: "ps", art: <g><rect x="1" y="0" width="19" height="19" rx="3.500" fill="#001e36" /><text x="10.500" y="12.800" textAnchor="middle" fontSize="10" fontWeight="700" fill="#31a8ff">Ps</text></g> },
  {
    key: "xampp",
    art: (
      <g>
        <rect x="0" y="0" width="20" height="20" rx="2" fill="#f37623" />
        <path d="M1 1.500h18" stroke="#f9b98d" strokeWidth=".8" />
        <path
          d="M5.500 4.500Q8.500 4 10 6.500Q11.500 4 14.500 4.500Q17.500 5 17 8Q16.800 9.300 15.800 10Q16.800 10.700 17 12Q17.500 15 14.500 15.500Q11.500 16 10 13.500Q8.500 16 5.500 15.500Q2.500 15 3 12Q3.200 10.700 4.200 10Q3.200 9.300 3 8Q2.500 5 5.500 4.500z"
          fill="#fff"
        />
        <path d="M6 7.500h2l1 2.500-1 2.500H6M14 7.500h-2L11 10l1 2.500h2M9 10h2" fill="none" stroke="#f37623" strokeWidth="1.500" />
      </g>
    ),
  },
  { key: "monitor", art: <g><path d="M0 2h20v15H0z" fill="#dfe9ef" stroke="#9aa9b3" strokeWidth=".6" /><path d="M1 15l2-3 2 2 1-9 2 9 2-2 2 1 1-7 2 7 3 1v1H1z" fill="#5b9bd0" /></g> },
  { key: "code", art: <g><path d="M15 0l5 2.300v15.400L15 20z" fill="#2aa5ee" /><path d="M15 0 5.500 8.800 2 6 .5 7l14.500 13v-5.500L6 10l9-5z" fill="#1583cd" /><path d="M.5 13 2 14.200 15 5V.5z" fill="#1173b8" /></g> },
  { key: "phpstorm", art: <g><path d="M1 2 7 0l7 3 5 1-1 8 1 5-6 3-5-2-7-2 1-7z" fill="#b345f1" /><path d="M1 2 7 0l3 6-9 10 1-7z" fill="#f23fc0" /><path d="M12 15l7 2-6 3-5-2z" fill="#765af8" /><path d="M4 4h12v12H4z" fill="#0a0a0a" /><text x="5" y="10.800" fontSize="6.500" fontWeight="700" fill="#fff">PS</text><path d="M5.500 13.500h4" stroke="#fff" /></g> },
  { key: "panel", art: <g><path d="M0 2.500h20v14.500H0z" fill="#b8e3f8" stroke="#6ab3da" strokeWidth=".7" /><circle cx="6" cy="9" r="3.600" fill="#2e8fd8" /><path d="M6 9V5.400A3.600 3.600 0 0 1 9.600 9z" fill="#f6a23a" /><path d="M12 6h6M12 9h6M12 12h4" stroke="#3a8bc4" strokeWidth="1.400" /><path d="M3 14.500h14" stroke="#2e8fd8" /></g> },
  { key: "steam", run: true, art: <g><circle cx="10" cy="10" r="9.500" fill="#14427a" /><path d="M.8 7.500A9.500 9.500 0 0 1 19.300 8z" fill="#10203f" /><path d="M.8 10.500l6 2.500 4-4" stroke="#eee" strokeWidth="2.800" fill="none" /><circle cx="13" cy="7.500" r="3" fill="#1b2c4a" stroke="#eee" strokeWidth="1.600" /><circle cx="7.500" cy="14" r="2" fill="#14427a" stroke="#eee" strokeWidth="1.300" /></g> },
  { key: "git", run: true, art: <g><path d="M10 0l5 5-5 5-5-5z" fill="#f0665a" /><path d="M5 5l5 5-5 5-5-5z" fill="#7aa7f0" /><path d="M15 5l5 5-5 5-5-5z" fill="#8fd07a" /><path d="M10 10l5 5-5 5-5-5z" fill="#f3cf63" /><path d="M8 3l5 5M10.500 6v9M10.500 8l4 3" stroke="#3a2a2a" strokeWidth="1.500" /><circle cx="10.500" cy="14.500" r="1.500" fill="#222" /></g> },
  { key: "snip", run: true, art: <g><rect x="0" y="0" width="15" height="15" rx="2" fill="#f3f3f3" /><path d="M3 3h9v9H3z" fill="none" stroke="#d0452f" strokeWidth="1.600" strokeDasharray="2 1" /><path d="M9 16l9-6M13 10v7" stroke="#2d6f9e" strokeWidth="1.600" /><circle cx="18.500" cy="9.500" r="1.700" fill="none" stroke="#35a4dc" strokeWidth="1.400" /><circle cx="12.500" cy="18" r="1.700" fill="none" stroke="#35a4dc" strokeWidth="1.400" /></g> },
];

function Taskbar() {
  return (
    <div className="flex h-[38px] shrink-0 items-center bg-[#202224] bg-[radial-gradient(38px_60px_at_168px_20px,#3d1823,transparent),radial-gradient(45px_60px_at_252px_15px,#3a1522,transparent),radial-gradient(60px_60px_at_310px_15px,#2a1c30,transparent),radial-gradient(58px_70px_at_742px_20px,#500d10,transparent),radial-gradient(170px_70px_at_1200px_15px,#43102c,transparent)] pl-[375px]">
      {apps.map(({ key, run, art }) => {
        const active = key === "chrome";
        return (
          <div key={key} className="flex w-[34.650px] shrink-0 justify-center">
            <div className={"relative flex h-[32px] w-[31px] items-center justify-center rounded-[3px] " + (active ? "bg-[#36363a]" : "")}>
              <svg viewBox="0 0 20 20" className="h-[19px] w-[19px] overflow-visible">{art}</svg>
              {active && <span className="absolute bottom-[1px] h-[2px] w-[12px] rounded-full bg-[#f5813a]" />}
              {run && <span className="absolute bottom-[1px] h-[2px] w-[5px] rounded-full bg-[#9b9b9b]" />}
            </div>
          </div>
        );
      })}
      <div className="ml-auto flex items-center pr-[11px] text-[#f0f0f0]">
        <ChevronUp className="h-[15px] w-[15px]" strokeWidth={1.800} />
        <Keyboard className="ml-[8px] h-[14px] w-[14px]" strokeWidth={1.600} />
        <span className="ml-[14px] text-[9px]">ENG</span>
        <Wifi className="ml-[14px] h-[12px] w-[12px]" strokeWidth={2.200} />
        <Volume2 className="ml-[6px] h-[14px] w-[14px]" strokeWidth={1.700} />
        <svg viewBox="0 0 13 8" className="ml-[6px] h-[8px] w-[13px]" fill="none" stroke="#f0f0f0"><rect x=".5" y=".5" width="10.500" height="7" rx="1.500" /><path d="M2 2h5v4H2z" fill="#f0f0f0" stroke="none" /><path d="M12.200 2.500v3" /></svg>
        <div dir="rtl" className="ml-[13px] w-[39px] text-[8.500px] leading-[12px] tracking-[-0.700px] whitespace-nowrap">
          <div>۱۰:۱۱ ق.ظ</div>
          <div>۱۴۰۱/۰۲/۰۲</div>
        </div>
        <span className="ml-[6px] flex h-[12px] w-[12px] items-center justify-center rounded-full bg-[#fb7d3c] text-[8px] text-[#30180c]">2</span>
      </div>
    </div>
  );
}

export default function App() {
  return (
    <div className="flex h-[680px] w-[1200px] flex-col overflow-hidden bg-[#e1e1e1] font-['Open_Sans','DejaVu_Sans',sans-serif]">
      <TabBar />
      <AddressBar />
      <div className="flex h-[548px] shrink-0 gap-[4px] border-b border-[#8f8f8f]">
        <div className="flex w-[901px] flex-col">
          <div className="flex h-[28px] shrink-0 items-center justify-between border-b border-[#bdbdbd] bg-[#f5f5f5] pr-[11px] pl-[6px] text-[8px] font-semibold tracking-[0.500px] text-[#6b6b6b]">
            <span className="flex items-center whitespace-pre">SHARE  - 2 - <span className="text-[9.900px] font-normal tracking-normal">اسِتادِ محمدِ  ذِهابِي</span></span>
            <FullIcon />
          </div>
          <div className="h-[2px] shrink-0 bg-black" />
          <PptTitle />
          <Ribbon />
          <Workspace />
          <Status />
          <div className="h-[4px] shrink-0 bg-[#f0f0ff] bg-[repeating-conic-gradient(#5a57c4_0_25%,#f0f0fa_0_50%)] bg-[length:4px_4px]" />
          <div className="h-[18px] shrink-0 bg-[#425563]" />
          <div className="h-[7px] shrink-0 bg-black" />
          <div className="flex-1 bg-[#e1e1e1]" />
        </div>
        <Rail />
      </div>
      <Player />
      <Taskbar />
    </div>
  );
}
